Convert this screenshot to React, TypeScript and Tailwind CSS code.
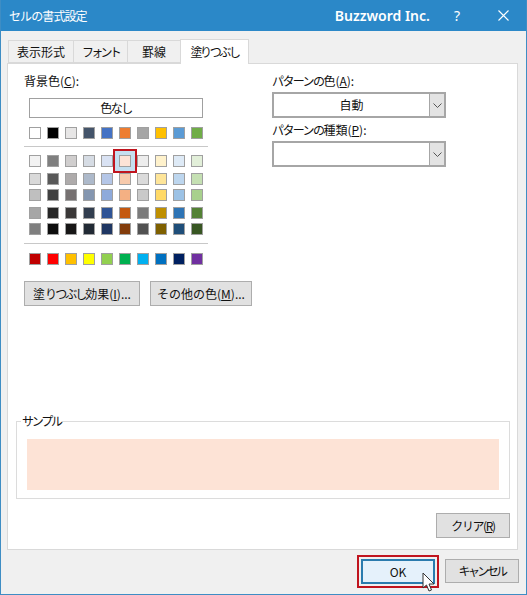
const themeColors = [
  ["bg-[#ffffff]", "bg-[#000000]", "bg-[#e7e6e6]", "bg-[#44546a]", "bg-[#4472c4]", "bg-[#ed7d31]", "bg-[#a5a5a5]", "bg-[#ffc000]", "bg-[#5b9bd5]", "bg-[#70ad47]"],
]

const shadeRows = [
  ["bg-[#f2f2f2]", "bg-[#7f7f7f]", "bg-[#d0cece]", "bg-[#d6dce4]", "bg-[#d9e2f3]", "bg-[#fde3d6]", "bg-[#ededed]", "bg-[#fff2cc]", "bg-[#deeaf6]", "bg-[#e2efd9]"],
  ["bg-[#d9d9d9]", "bg-[#595959]", "bg-[#aeabab]", "bg-[#adb9ca]", "bg-[#b4c6e7]", "bg-[#f7caac]", "bg-[#dbdbdb]", "bg-[#fee599]", "bg-[#bdd6ee]", "bg-[#c5e0b3]"],
  ["bg-[#bfbfbf]", "bg-[#404040]", "bg-[#767171]", "bg-[#8496b0]", "bg-[#8eaadb]", "bg-[#f4b083]", "bg-[#c9c9c9]", "bg-[#ffd966]", "bg-[#9cc2e5]", "bg-[#a8d08d]"],
  ["bg-[#a6a6a6]", "bg-[#262626]", "bg-[#3a3838]", "bg-[#323e4f]", "bg-[#2f5496]", "bg-[#c45911]", "bg-[#7b7b7b]", "bg-[#bf8f00]", "bg-[#2e74b5]", "bg-[#538135]"],
  ["bg-[#7f7f7f]", "bg-[#0d0d0d]", "bg-[#171616]", "bg-[#222a35]", "bg-[#1f3763]", "bg-[#833c0b]", "bg-[#525252]", "bg-[#7f6000]", "bg-[#1f4e79]", "bg-[#385623]"],
]

const standardColors = [
  ["bg-[#c00000]", "bg-[#ff0000]", "bg-[#ffc000]", "bg-[#ffff00]", "bg-[#92d050]", "bg-[#00b050]", "bg-[#00b0f0]", "bg-[#0070c0]", "bg-[#002060]", "bg-[#7030a0]"],
]

function Swatch({ color, selected }: { color: string; selected?: boolean }) {
  return (
    <div className="relative h-3 w-3">
      <div className={`h-3 w-3 border border-[#a0a0a0] ${color}`} />
      {selected && (
        <div className="absolute -left-[6px] -top-[6px] h-[24px] w-[24px] border-2 border-[#c0141e] bg-[#c5dff0] p-[4px]">
          <div className={`h-3 w-3 border border-[#a0a0a0] ${color}`} />
        </div>
      )}
    </div>
  )
}

function SwatchRow({ colors, selected, className }: { colors: string[]; selected?: number; className?: string }) {
  return (
    <div className={`flex gap-[6px] pl-[5px] ${className ?? ""}`}>
      {colors.map((c, i) => (
        <Swatch key={i} color={c} selected={selected === i} />
      ))}
    </div>
  )
}

function Button({ children, className }: { children: React.ReactNode; className?: string }) {
  return (
    <div className={`flex items-center justify-center border border-[#adadad] bg-[#e1e1e1] text-[12px] text-[#111] ${className ?? ""}`}>
      {children}
    </div>
  )
}

function Select({ value }: { value?: string }) {
  return (
    <div className="flex h-[26px] w-[174px] border-2 border-[#a6a6a6] bg-white">
      <div className="flex flex-1 items-center justify-center text-[12px] text-[#111]">{value}</div>
      <div className="flex w-[15px] items-center justify-center border-l border-[#a6a6a6] bg-[#e3e3e3]">
        <svg width="9" height="5" viewBox="0 0 9 5" fill="none" stroke="#555" strokeWidth="1">
          <path d="M0.5 0.5 L4.5 4.5 L8.5 0.5" />
        </svg>
      </div>
    </div>
  )
}

export default function App() {
  return (
    <div className="relative flex h-[595px] w-[527px] flex-col overflow-hidden border-x border-b border-[#3e8dc4] bg-[#f0f0f0] font-['Noto_Sans_CJK_JP','Liberation_Sans',sans-serif] text-[12px] text-[#111]">
      <div className="-mx-px flex h-[31px] shrink-0 items-center bg-[#2b88c8] pl-[9px] text-white">
        <span className="flex-1 tracking-[-0.9px]">セルの書式設定</span>
        <span className="font-['Noto_Sans','Liberation_Sans',sans-serif] text-[14px] font-semibold">Buzzword Inc.</span>
        <span className="ml-[24px] font-['Noto_Sans','Liberation_Sans',sans-serif] text-[14px]">?</span>
        <svg className="ml-[38px] mr-[18px]" width="11" height="11" viewBox="0 0 11 11" stroke="#fff" strokeWidth="1.1">
          <path d="M0.5 0.5 L10.5 10.5 M10.5 0.5 L0.5 10.5" />
        </svg>
      </div>

      <div className="flex h-[32px] shrink-0 items-end pl-[7px]">
        <div className="flex h-[23px] w-[65px] items-center justify-center border-y border-l border-[#d9d9d9] bg-[#f0f0f0]">表示形式</div>
        <div className="flex h-[23px] w-[54px] items-center justify-center border-y border-l border-[#d9d9d9] bg-[#f0f0f0] tracking-[-2.8px]">フォント</div>
        <div className="flex h-[23px] w-[53px] items-center justify-center border-y border-l border-[#d9d9d9] bg-[#f0f0f0]">罫線</div>
        <div className="relative z-10 -mb-px flex h-[25px] w-[69px] items-center justify-center border-x border-t border-[#d9d9d9] bg-white tracking-[-2.4px]">塗りつぶし</div>
      </div>

      <div className="ml-[6px] flex h-[487px] w-[511px] shrink-0 flex-col border border-[#d9d9d9] bg-white pl-[16px]">
        <div className="flex h-[346px] shrink-0">
          <div className="flex w-[248px] flex-col">
            <div className="mt-[8px] h-[18px] leading-[18px]">
              背景色(<span className="underline">C</span>):
            </div>
            <div className="ml-[5px] mt-[8px] flex h-[20px] w-[174px] items-center justify-center border border-[#a0a0a0] tracking-[-1.5px]">色なし</div>
            <SwatchRow className="mt-[9px]" colors={themeColors[0]} />
            <div className="mt-[7px] h-px w-[184px] bg-[#c8c8c8]" />
            <SwatchRow className="mt-[8px]" colors={shadeRows[0]} selected={5} />
            <SwatchRow className="mt-[6px]" colors={shadeRows[1]} />
            <SwatchRow className="mt-[4px]" colors={shadeRows[2]} />
            <SwatchRow className="mt-[6px]" colors={shadeRows[3]} />
            <SwatchRow className="mt-[4px]" colors={shadeRows[4]} />
            <div className="mt-[8px] h-px w-[184px] bg-[#c8c8c8]" />
            <SwatchRow className="mt-[9px]" colors={standardColors[0]} />
            <div className="mt-[16px] flex gap-[10px]">
              <Button className="h-[25px] w-[116px]">
                <span>
                  塗<span className="tracking-[-2px]">りつぶし</span>効果(<span className="underline">I</span>)...
                </span>
              </Button>
              <Button className="h-[25px] w-[102px]">
                <span>その他の色(<span className="underline">M</span>)...</span>
              </Button>
            </div>
          </div>
          <div className="flex flex-col">
            <div className="mt-[8px] h-[18px] leading-[18px]">
              <span className="tracking-[-1.6px]">パターンの</span>色(<span className="underline">A</span>):
            </div>
            <div className="mt-[2px]">
              <Select value="自動" />
            </div>
            <div className="mt-[3px] h-[18px] leading-[18px]">
              <span className="tracking-[-1.6px]">パターンの</span>種類(<span className="underline">P</span>):
            </div>
            <div className="mt-[2px]">
              <Select />
            </div>
          </div>
        </div>

        <div className="relative -ml-[8px] mt-[11px] h-[78px] w-[494px] border border-[#dcdcdc] px-[10px] pt-[17px]">
          <span className="absolute -top-[10px] left-[4px] bg-white px-[1px] leading-[18px] tracking-[-2.2px]">サンプル</span>
          <div className="h-[51px] w-[472px] bg-[#fde3d6]" />
        </div>

        <div className="mt-[14px] flex justify-end pr-[7px]">
          <Button className="h-[25px] w-[74px]">
            <span className="tracking-[-1.4px]">クリア(<span className="underline">R</span>)</span>
          </Button>
        </div>
      </div>

      <div className="mt-[9px] flex justify-end gap-[10px] pr-[7px]">
        <div className="relative h-[25px] w-[74px]">
          <div className="absolute -inset-[4px] border-2 border-[#c0141e]" />
          <div className="flex h-[25px] w-[74px] items-center justify-center border-2 border-[#2a7bae] bg-[#e5f1fb]">OK</div>
          <svg className="absolute left-[61px] top-[13px]" width="14" height="22" viewBox="0 0 14 22">
            <path d="M1 1 L1 16 L4.5 13 L7 19 L9.5 18 L7 12 L12 12 Z" fill="#fff" stroke="#333" strokeWidth="1" strokeLinejoin="round" />
          </svg>
        </div>
        <Button className="h-[24px] w-[74px] tracking-[-2.6px]">キャンセル</Button>
      </div>
    </div>
  )
}
